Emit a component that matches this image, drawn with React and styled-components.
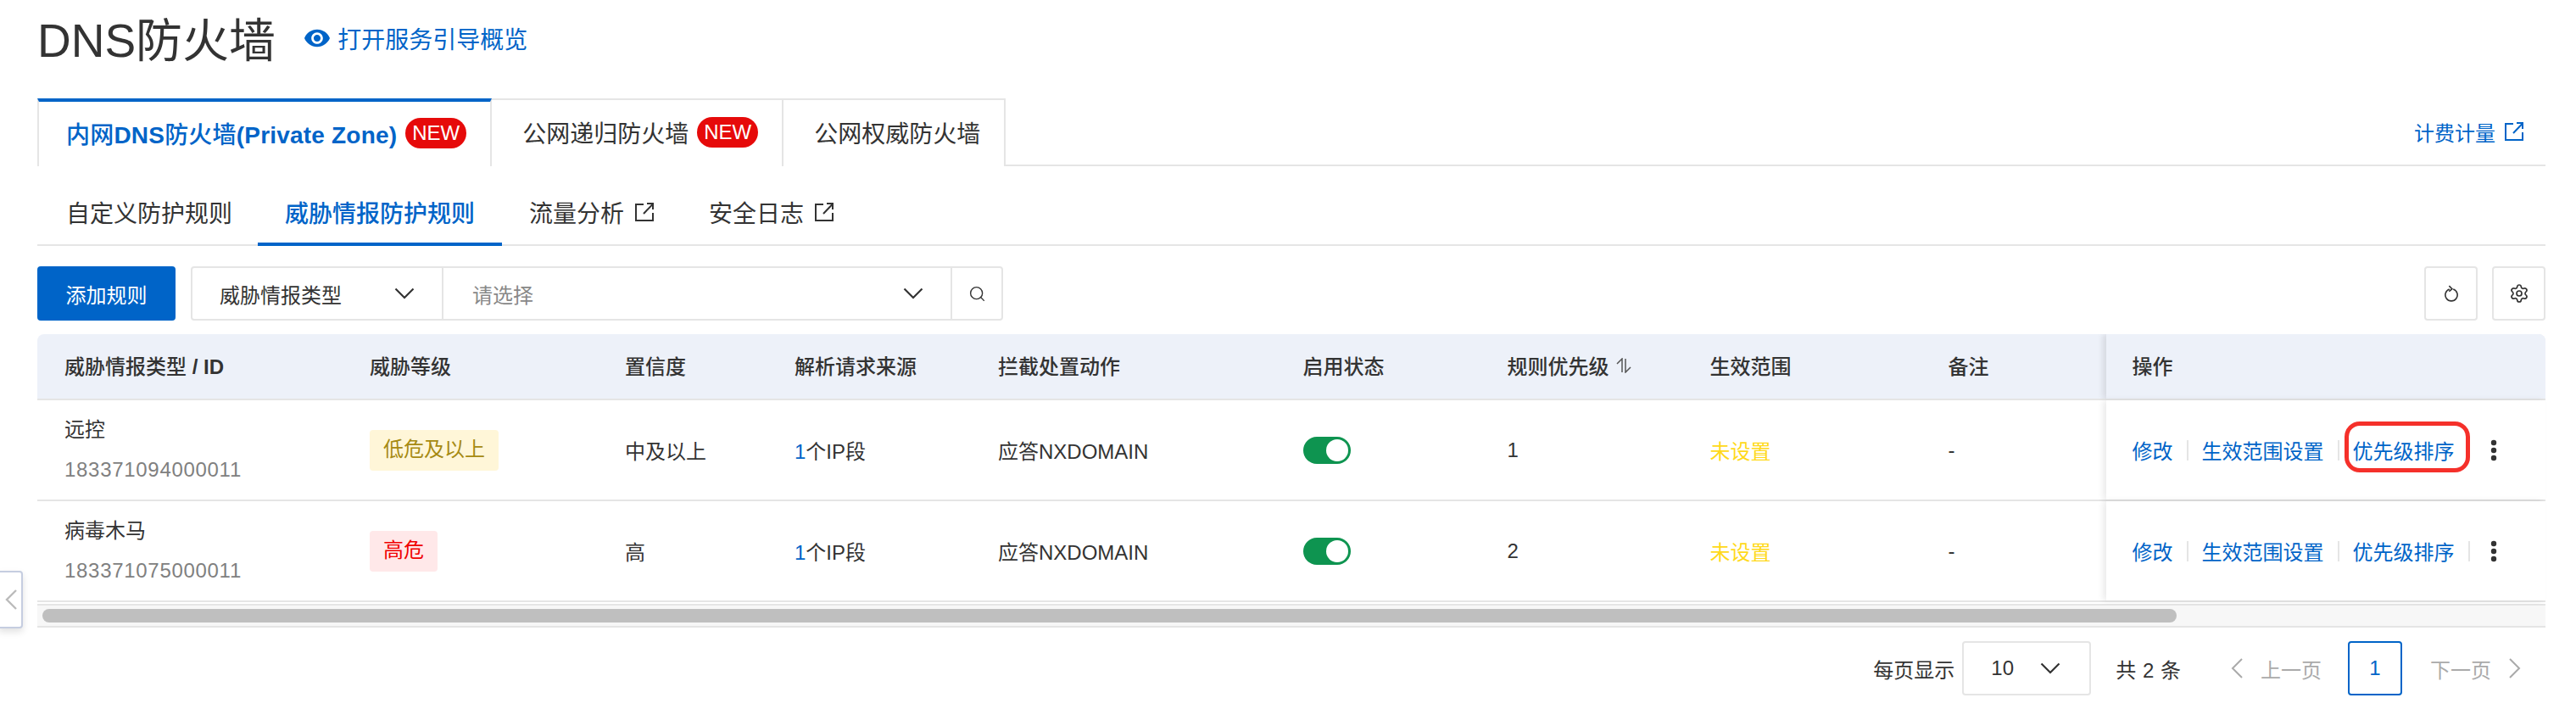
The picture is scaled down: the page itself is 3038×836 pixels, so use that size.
import React from 'react';
import styled, { createGlobalStyle } from 'styled-components';
import { Search, Settings } from 'lucide-react';

const GlobalStyle = createGlobalStyle`
  html, body {
    margin: 0;
    padding: 0;
    background: #fff;
  }
  body {
    font-family: "Liberation Sans", "Noto Sans CJK SC", sans-serif;
    font-size: 24px;
    color: #333;
  }
  * {
    box-sizing: border-box;
  }
`;

const BLUE = '#0064c8';
const LINE = '#e5e5e5';
const COLUMNS = '360px 301px 200px 240px 359.5px 241px 239px 281px 218px 1fr';

const Page = styled.div`
  position: relative;
  width: 3038px;
  height: 836px;
  padding: 0 36px 0 44px;
  overflow: hidden;
`;

const TitleRow = styled.div`
  height: 116px;
  padding-bottom: 26px;
  display: flex;
  align-items: center;
`;

const Title = styled.h1`
  margin: 0 34px 0 0;
  padding-top: 6px;
  font-size: 55px;
  line-height: 64px;
  font-weight: 400;
  color: #333;
`;

const GuideLink = styled.a`
  display: flex;
  align-items: center;
  gap: 9px;
  font-size: 28px;
  color: ${BLUE};
`;

const MainTabs = styled.div`
  height: 80px;
  display: flex;
  justify-content: space-between;
  border-bottom: 2px solid ${LINE};
`;

const TabList = styled.div`
  display: flex;
`;

const MainTab = styled.div`
  display: flex;
  align-items: center;
  gap: 10px;
  height: 80px;
  padding: 0 28px 2px 36px;
  font-size: 28px;
  color: #333;
  background: #fff;
  border-top: 2px solid ${LINE};
  border-right: 2px solid ${LINE};
`;

const ActiveMainTab = styled(MainTab)`
  padding: 0 28px 2px 32px;
  font-weight: 500;
  letter-spacing: 0.2px;
  color: ${BLUE};
  border-top: 4px solid ${BLUE};
  border-left: 2px solid ${LINE};
`;

const LatinBold = styled.span`
  font-weight: 700;
`;

const NewBadge = styled.span`
  width: 72px;
  height: 36px;
  border-radius: 18px;
  background: #e60a0a;
  color: #fff;
  font-size: 24px;
  font-weight: 400;
  line-height: 36px;
  text-align: center;
  letter-spacing: 0;
`;

const BillingLink = styled.a`
  display: flex;
  align-items: center;
  gap: 10px;
  padding-right: 25px;
  color: ${BLUE};
  font-size: 24px;
`;

const SubTabs = styled.div`
  height: 94px;
  display: flex;
  padding-left: 2px;
  border-bottom: 2px solid ${LINE};
`;

const SubTab = styled.div`
  display: flex;
  align-items: center;
  gap: 12px;
  height: 94px;
  padding: 18px ${p => (p.$first ? '30px' : '32px')} 0 32px;
  font-size: 28px;
  font-weight: ${p => (p.$active ? 500 : 400)};
  color: ${p => (p.$active ? BLUE : '#333')};
  border-bottom: 4px solid ${p => (p.$active ? BLUE : 'transparent')};
`;

const Toolbar = styled.div`
  margin-top: 24px;
  height: 64px;
  display: flex;
  align-items: stretch;
`;

const PrimaryButton = styled.button`
  width: 163px;
  border: none;
  border-radius: 4px;
  background: ${BLUE};
  color: #fff;
  font: inherit;
  font-size: 24px;
`;

const FilterGroup = styled.div`
  display: flex;
  margin-left: 18px;
  width: 958px;
  border: 2px solid ${LINE};
  border-radius: 4px;
`;

const FilterSelect = styled.div`
  flex: none;
  width: ${p => p.$width}px;
  display: flex;
  align-items: center;
  justify-content: space-between;
  padding: 0 32px 0 ${p => p.$pad}px;
  border-right: 2px solid ${LINE};
  color: ${p => (p.$placeholder ? '#888' : '#333')};
`;

const FilterSearch = styled.div`
  flex: 1;
  display: flex;
  align-items: center;
  justify-content: center;
  color: #333;
`;

const ToolActions = styled.div`
  margin-left: auto;
  display: flex;
  gap: 17px;
`;

const IconButton = styled.div`
  width: 63px;
  height: 64px;
  display: flex;
  align-items: center;
  justify-content: center;
  border: 2px solid ${LINE};
  border-radius: 4px;
  color: #333;
`;

const Table = styled.div`
  margin-top: 16px;
`;

const HeadRow = styled.div`
  display: grid;
  grid-template-columns: ${COLUMNS};
  height: 78px;
  background: #edf1f9;
  border-bottom: 2px solid ${LINE};
  border-radius: 8px 8px 0 0;
  overflow: hidden;
`;

const HeadCell = styled.div`
  display: flex;
  align-items: center;
  gap: 7px;
  padding-left: 32px;
  padding-bottom: 3px;
  font-weight: 500;
  color: #333;
`;

const BodyRow = styled.div`
  display: grid;
  grid-template-columns: ${COLUMNS};
  height: 119px;
  border-bottom: 2px solid ${LINE};
`;

const Cell = styled.div`
  display: flex;
  align-items: center;
  padding-left: 32px;
  color: #333;
`;

const OpsHead = styled(HeadCell)`
  padding-left: 31px;
  background: #edf1f9;
  box-shadow: -4px 0 7px rgba(0, 0, 0, 0.1);
`;

const OpsCell = styled(Cell)`
  padding-left: 31px;
  background: #fff;
  box-shadow: -4px 0 7px rgba(0, 0, 0, 0.08);
  gap: 16px;
`;

const NameCell = styled(Cell)`
  flex-direction: column;
  align-items: flex-start;
  justify-content: center;
  gap: 15px;
`;

const NameText = styled.div`
  line-height: 32px;
`;

const IdText = styled.div`
  line-height: 32px;
  color: #808080;
  letter-spacing: 0.7px;
`;

const LevelTag = styled.span`
  height: 48px;
  padding: 0 16px;
  line-height: 46px;
  border-radius: 4px;
  background: ${p => (p.$high ? '#ffe8e9' : '#fff6d8')};
  color: ${p => (p.$high ? '#f00000' : '#a68a12')};
`;

const BlueNum = styled.span`
  color: ${BLUE};
`;

const Toggle = styled.span`
  position: relative;
  width: 56px;
  height: 32px;
  border-radius: 16px;
  background: #0e9450;

  &::after {
    content: '';
    position: absolute;
    right: 3px;
    top: 3px;
    width: 26px;
    height: 26px;
    border-radius: 50%;
    background: #fff;
  }
`;

const Unset = styled.span`
  color: #ffd91a;
`;

const OpLink = styled.a`
  position: relative;
  color: ${BLUE};
  white-space: nowrap;
`;

const Highlight = styled.span`
  position: absolute;
  left: -10px;
  top: -16px;
  width: 148px;
  height: 60px;
  border: 5px solid #f5302a;
  border-radius: 18px;
`;

const OpSep = styled.span`
  width: 2px;
  height: 24px;
  background: ${LINE};
`;

const MoreDots = styled.svg`
  margin-left: 8px;
`;

const ScrollTrack = styled.div`
  height: 28px;
  margin-top: 2px;
  padding: 4px 6px 0;
  background: #f7f7f7;
  border-bottom: 2px solid ${LINE};
  border-top: 2px solid ${LINE};
`;

const ScrollThumb = styled.div`
  width: 2517px;
  height: 16px;
  border-radius: 8px;
  background: #bfbfbf;
`;

const Pagination = styled.div`
  margin-top: 16px;
  height: 64px;
  display: flex;
  align-items: center;
  justify-content: flex-end;
  padding-right: 29px;
`;

const PageSizeLabel = styled.span`
  margin-right: 9px;
`;

const PageSize = styled.div`
  width: 152px;
  height: 64px;
  display: flex;
  align-items: center;
  justify-content: space-between;
  padding: 0 34px 0 32px;
  border: 2px solid ${LINE};
  border-radius: 4px;
`;

const Total = styled.span`
  margin: 0 59px 0 29px;
  word-spacing: 1px;
`;

const PageNav = styled.span`
  display: flex;
  align-items: center;
  gap: 21px;
  color: #aaa;
`;

const PageCurrent = styled.div`
  width: 64px;
  height: 64px;
  margin: 0 33px 0 31px;
  display: flex;
  align-items: center;
  justify-content: center;
  border: 2px solid ${BLUE};
  border-radius: 4px;
  color: ${BLUE};
`;

const SideHandle = styled.div`
  position: absolute;
  left: -2px;
  top: 673px;
  width: 29px;
  height: 68px;
  display: flex;
  align-items: center;
  padding-left: 6px;
  background: #fff;
  border: 2px solid #c5cde0;
  border-radius: 0 4px 4px 0;
  box-shadow: 0 4px 8px rgba(0, 0, 0, 0.12);
`;

const EyeIcon = () => (
  <svg width="30" height="24" viewBox="1 4 22 16" fill="currentColor">
    <path d="M12 4.5C7 4.5 2.73 7.61 1 12c1.73 4.39 6 7.5 11 7.5s9.27-3.11 11-7.5c-1.73-4.39-6-7.5-11-7.5zM12 17c-2.76 0-5-2.24-5-5s2.24-5 5-5 5 2.24 5 5-2.24 5-5 5zm0-8c-1.66 0-3 1.34-3 3s1.34 3 3 3 3-1.34 3-3-1.34-3-3-3z" />
  </svg>
);

const ExternalIcon = () => (
  <svg width="24" height="22" viewBox="0 0 24 22" fill="none" stroke="currentColor" strokeWidth="2">
    <path d="M11 2H2v19h20V12" />
    <path d="M11 13 22 1.5" />
    <path d="M15 1h7v7" />
  </svg>
);

const Chevron = () => (
  <svg width="24" height="14" viewBox="0 0 24 14" fill="none" stroke="#333" strokeWidth="2.2">
    <path d="M1.5 1.5 12 12 22.5 1.5" />
  </svg>
);

const RefreshIcon = () => (
  <svg width="16" height="20" viewBox="0 0 18 22" fill="none" stroke="currentColor" strokeWidth="1.8">
    <path d="M6.5 5.4a8 8 0 1 0 5 0" />
    <path d="M6 1 10 5 6 8.4" />
  </svg>
);

const SortIcon = () => (
  <svg width="20" height="18" viewBox="0 0 20 18" fill="none" stroke="#555" strokeWidth="1.5">
    <path d="M8 17V1L2 7" />
    <path d="M12 1v16l6-6" />
  </svg>
);

const DotsIcon = () => (
  <MoreDots width="8" height="26" viewBox="0 0 8 26" fill="#333">
    <circle cx="4" cy="4" r="3.2" />
    <circle cx="4" cy="13" r="3.2" />
    <circle cx="4" cy="22" r="3.2" />
  </MoreDots>
);

const PageArrow = ({ left }) => (
  <svg width="14" height="24" viewBox="0 0 14 24" fill="none" stroke="#aaa" strokeWidth="2">
    <path d={left ? 'M13 1 2 12l11 11' : 'M1 1l11 11L1 23'} />
  </svg>
);

const rules = [
  { name: '远控', id: '183371094000011', level: '低危及以上', confidence: '中及以上', priority: 1 },
  { name: '病毒木马', id: '183371075000011', level: '高危', high: true, confidence: '高', priority: 2 },
];

const headers = ['威胁等级', '置信度', '解析请求来源', '拦截处置动作', '启用状态'];

export default function App() {
  return (
    <Page>
      <GlobalStyle />
      <TitleRow>
        <Title>DNS防火墙</Title>
        <GuideLink><EyeIcon />打开服务引导概览</GuideLink>
      </TitleRow>

      <MainTabs>
        <TabList>
          <ActiveMainTab>
            <span>内网<LatinBold>DNS</LatinBold>防火墙<LatinBold>(Private Zone)</LatinBold></span>
            <NewBadge>NEW</NewBadge>
          </ActiveMainTab>
          <MainTab>公网递归防火墙<NewBadge>NEW</NewBadge></MainTab>
          <MainTab>公网权威防火墙</MainTab>
        </TabList>
        <BillingLink>计费计量<ExternalIcon /></BillingLink>
      </MainTabs>

      <SubTabs>
        <SubTab $first>自定义防护规则</SubTab>
        <SubTab $active>威胁情报防护规则</SubTab>
        <SubTab>流量分析<ExternalIcon /></SubTab>
        <SubTab>安全日志<ExternalIcon /></SubTab>
      </SubTabs>

      <Toolbar>
        <PrimaryButton>添加规则</PrimaryButton>
        <FilterGroup>
          <FilterSelect $width={296} $pad={32}>威胁情报类型<Chevron /></FilterSelect>
          <FilterSelect $width={600} $pad={34} $placeholder>请选择<Chevron /></FilterSelect>
          <FilterSearch><Search size={21} strokeWidth={1.6} /></FilterSearch>
        </FilterGroup>
        <ToolActions>
          <IconButton><RefreshIcon /></IconButton>
          <IconButton><Settings size={24} strokeWidth={1.7} /></IconButton>
        </ToolActions>
      </Toolbar>

      <Table>
        <HeadRow>
          <HeadCell><span>威胁情报类型 <LatinBold>/ ID</LatinBold></span></HeadCell>
          {headers.map(h => <HeadCell key={h}>{h}</HeadCell>)}
          <HeadCell>规则优先级<SortIcon /></HeadCell>
          <HeadCell>生效范围</HeadCell>
          <HeadCell>备注</HeadCell>
          <OpsHead>操作</OpsHead>
        </HeadRow>
        {rules.map((rule, i) => (
          <BodyRow key={rule.id}>
            <NameCell>
              <NameText>{rule.name}</NameText>
              <IdText>{rule.id}</IdText>
            </NameCell>
            <Cell><LevelTag $high={rule.high}>{rule.level}</LevelTag></Cell>
            <Cell>{rule.confidence}</Cell>
            <Cell><span><BlueNum>1</BlueNum>个IP段</span></Cell>
            <Cell>应答NXDOMAIN</Cell>
            <Cell><Toggle /></Cell>
            <Cell>{rule.priority}</Cell>
            <Cell><Unset>未设置</Unset></Cell>
            <Cell>-</Cell>
            <OpsCell>
              <OpLink>修改</OpLink>
              <OpSep />
              <OpLink>生效范围设置</OpLink>
              <OpSep />
              <OpLink>优先级排序{i === 0 && <Highlight />}</OpLink>
              <OpSep />
              <DotsIcon />
            </OpsCell>
          </BodyRow>
        ))}
        <ScrollTrack><ScrollThumb /></ScrollTrack>
      </Table>

      <Pagination>
        <PageSizeLabel>每页显示</PageSizeLabel>
        <PageSize>10<Chevron /></PageSize>
        <Total>共 2 条</Total>
        <PageNav><PageArrow left />上一页</PageNav>
        <PageCurrent>1</PageCurrent>
        <PageNav>下一页<PageArrow /></PageNav>
      </Pagination>

      <SideHandle>
        <svg width="14" height="24" viewBox="0 0 14 24" fill="none" stroke="#bbb" strokeWidth="2.4">
          <path d="M13 1 2 12l11 11" />
        </svg>
      </SideHandle>
    </Page>
  );
}
